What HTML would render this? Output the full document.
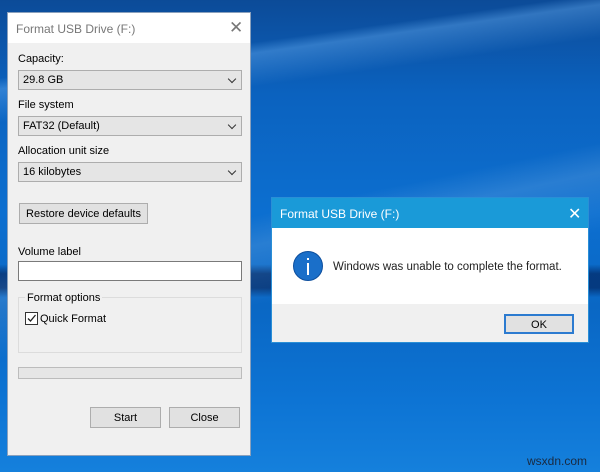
<!DOCTYPE html>
<html><head><style>
*{margin:0;padding:0;box-sizing:border-box}
body{width:600px;height:472px;overflow:hidden;position:relative;font-family:"Liberation Sans",sans-serif;font-size:11px;color:#000;
background:
linear-gradient(172deg,transparent 0 14%,rgba(120,190,255,.35) 16%,transparent 22%),
linear-gradient(168deg,transparent 0 45%,rgba(255,255,255,.12) 50%,transparent 60%),
linear-gradient(180deg,transparent 0 56%,rgba(0,20,70,.55) 58%,rgba(0,20,70,.55) 61%,transparent 63%),
linear-gradient(180deg,#0c4b98 0%,#0b62bf 20%,#0c6fd0 45%,#0a67c4 65%,#0d74d4 85%,#1580dc 100%);}
.abs{position:absolute}
.dlg{left:7px;top:12px;width:244px;height:444px;background:#f0f0f0;border:1px solid #8aa0bc}
.tb{position:absolute;left:0;top:0;width:100%;height:30px;background:#fff}
.combo{position:absolute;left:10px;width:224px;height:20px;background:#e5e5e5;border:1px solid #adadad;padding:3px 0 0 4px}
.combo:after{content:"";position:absolute;right:6px;top:5px;width:5px;height:5px;border-right:1px solid #333;border-bottom:1px solid #333;transform:rotate(45deg)}
.btn{position:absolute;height:21px;background:#e1e1e1;border:1px solid #adadad;text-align:center;padding-top:4px}
.lbl{position:absolute;left:10px}
</style></head><body>
<div class="abs dlg">
 <div class="tb"><span class="abs" style="left:8px;top:9px;color:#777;font-size:12px">Format USB Drive (F:)</span>
 <span class="abs" style="left:221px;top:5px;color:#777;font-size:17px">✕</span></div>
 <div class="lbl" style="top:40px">Capacity:</div>
 <div class="combo" style="top:57px">29.8 GB</div>
 <div class="lbl" style="top:86px">File system</div>
 <div class="combo" style="top:103px">FAT32 (Default)</div>
 <div class="lbl" style="top:132px">Allocation unit size</div>
 <div class="combo" style="top:149px">16 kilobytes</div>
 <div class="btn" style="left:11px;top:190px;width:129px">Restore device defaults</div>
 <div class="lbl" style="top:233px">Volume label</div>
 <div class="abs" style="left:10px;top:248px;width:224px;height:20px;background:#fff;border:1px solid #7a7a7a"></div>
 <div class="abs" style="left:10px;top:284px;width:224px;height:56px;border:1px solid #dcdcdc"></div>
 <div class="abs" style="left:17px;top:279px;background:#f0f0f0;padding:0 2px">Format options</div>
 <div class="abs" style="left:17px;top:299px;width:13px;height:13px;background:#fff;border:1px solid #333"><svg width="11" height="11" style="position:absolute;left:0;top:0"><path d="M2 5.5L4.5 8L9.5 2" stroke="#222" stroke-width="1.3" fill="none"/></svg></div>
 <div class="abs" style="left:32px;top:300px">Quick Format</div>
 <div class="abs" style="left:10px;top:354px;width:224px;height:12px;background:#e6e6e6;border:1px solid #bcbcbc"></div>
 <div class="btn" style="left:82px;top:394px;width:71px">Start</div>
 <div class="btn" style="left:161px;top:394px;width:71px">Close</div>
</div>
<div class="abs" style="left:271px;top:197px;width:318px;height:146px;background:#f0f0f0;border:1px solid #2a8fd6">
 <div class="abs" style="left:0;top:0;width:100%;height:30px;background:#1a9ad8"><span class="abs" style="left:8px;top:9px;color:#fff;font-size:12px">Format USB Drive (F:)</span>
 <span class="abs" style="left:296px;top:6px;color:#fff;font-size:16px">✕</span></div>
 <div class="abs" style="left:0;top:30px;width:100%;height:76px;background:#fff"></div>
 <div class="abs" style="left:21px;top:53px;width:30px;height:30px;border-radius:50%;background:#1a6fc9;border:1px solid #0d4f9e"><div class="abs" style="left:13px;top:6px;width:2px;height:2px;background:#fff"></div><div class="abs" style="left:13px;top:11px;width:2px;height:12px;background:#fff"></div></div>
 <div class="abs" style="left:61px;top:63px;font-size:11.5px;color:#222">Windows was unable to complete the format.</div>
 <div class="btn" style="left:232px;top:116px;width:70px;height:20px;border:2px solid #2c7bd0;padding-top:3px">OK</div>
</div>
<div class="abs" style="left:527px;top:454px;color:#1a2a40;font-size:12px">wsxdn.com</div>
</body></html>
